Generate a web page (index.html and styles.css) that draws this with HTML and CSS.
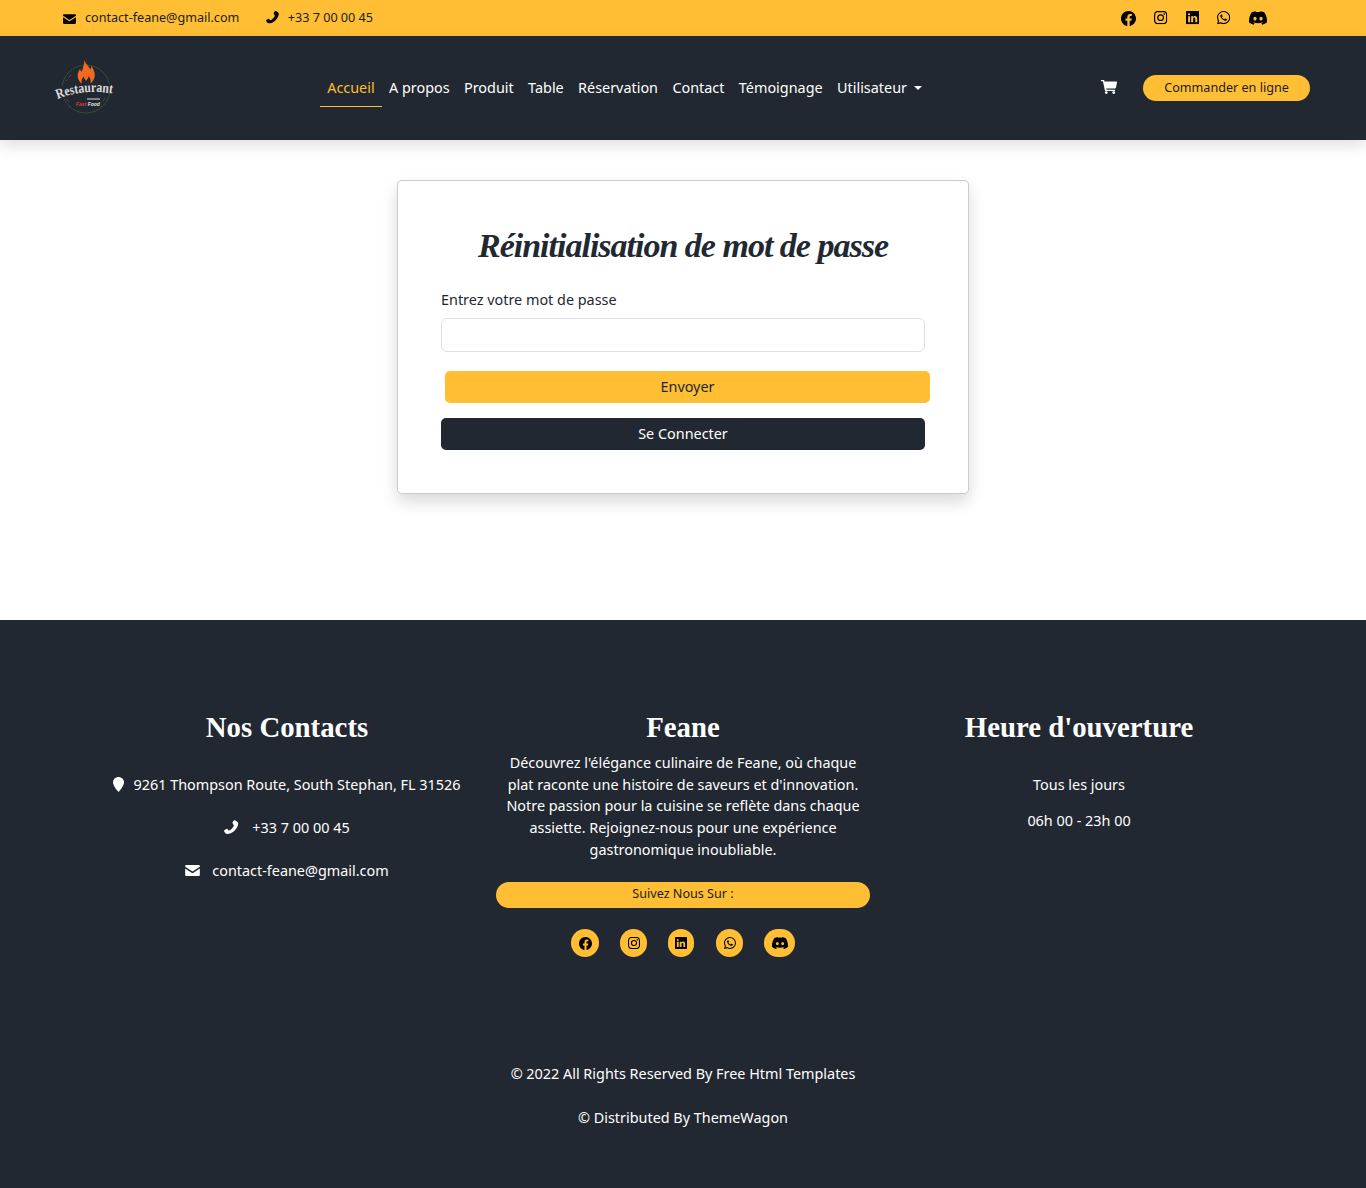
FILE: index.html
```html
<!DOCTYPE html>
<html lang="fr">
<head>
<meta charset="utf-8">
<title>Réinitialisation de mot de passe</title>
<link rel="stylesheet" href="styles.css">
</head>
<body>
<svg class="sprite" aria-hidden="true">
  <symbol id="fb" viewBox="0 0 16 16"><path d="M16 8.049c0-4.446-3.582-8.05-8-8.05C3.58 0-.002 3.603-.002 8.05c0 4.017 2.926 7.347 6.75 7.951v-5.625h-2.03V8.05H6.75V6.275c0-2.017 1.195-3.131 3.022-3.131.876 0 1.791.157 1.791.157v1.98h-1.009c-.993 0-1.303.621-1.303 1.258v1.51h2.218l-.354 2.326H9.25V16c3.824-.604 6.75-3.934 6.75-7.951"/></symbol>
  <symbol id="ig" viewBox="0 0 16 16"><path d="M8 0C5.829 0 5.556.01 4.703.048 3.85.088 3.269.222 2.76.42a3.9 3.9 0 0 0-1.417.923A3.9 3.9 0 0 0 .42 2.76C.222 3.268.087 3.85.048 4.7.01 5.555 0 5.827 0 8.001c0 2.172.01 2.444.048 3.297.04.852.174 1.433.372 1.942.205.526.478.972.923 1.417.444.445.89.719 1.416.923.51.198 1.09.333 1.942.372C5.555 15.99 5.827 16 8 16s2.444-.01 3.298-.048c.851-.04 1.434-.174 1.943-.372a3.9 3.9 0 0 0 1.416-.923c.445-.445.718-.891.923-1.417.197-.509.332-1.09.372-1.942C15.99 10.445 16 10.173 16 8s-.01-2.445-.048-3.299c-.04-.851-.175-1.433-.372-1.941a3.9 3.9 0 0 0-.923-1.417A3.9 3.9 0 0 0 13.24.42c-.51-.198-1.092-.333-1.943-.372C10.443.01 10.172 0 7.998 0zm-.717 1.442h.718c2.136 0 2.389.007 3.232.046.78.035 1.204.166 1.486.275.373.145.64.319.92.599s.453.546.598.92c.11.281.24.705.275 1.485.039.843.047 1.096.047 3.231s-.008 2.389-.047 3.232c-.035.78-.166 1.203-.275 1.485a2.5 2.5 0 0 1-.599.919c-.28.28-.546.453-.92.598-.28.11-.704.24-1.485.276-.843.038-1.096.047-3.232.047s-2.39-.009-3.233-.047c-.78-.036-1.203-.166-1.485-.276a2.5 2.5 0 0 1-.92-.598 2.5 2.5 0 0 1-.6-.92c-.109-.281-.24-.705-.275-1.485-.038-.843-.046-1.096-.046-3.233s.008-2.388.046-3.231c.036-.78.166-1.204.276-1.486.145-.373.319-.64.599-.92s.546-.453.92-.598c.282-.11.705-.24 1.485-.276.738-.034 1.024-.044 2.515-.045zm4.988 1.328a.96.96 0 1 0 0 1.92.96.96 0 0 0 0-1.92m-4.27 1.122a4.109 4.109 0 1 0 0 8.217 4.109 4.109 0 0 0 0-8.217m0 1.441a2.667 2.667 0 1 1 0 5.334 2.667 2.667 0 0 1 0-5.334"/></symbol>
  <symbol id="li" viewBox="0 0 16 16"><path d="M0 1.146C0 .513.526 0 1.175 0h13.65C15.474 0 16 .513 16 1.146v13.708c0 .633-.526 1.146-1.175 1.146H1.175C.526 16 0 15.487 0 14.854zm4.943 12.248V6.169H2.542v7.225zm-1.2-8.212c.837 0 1.358-.554 1.358-1.248-.015-.709-.52-1.248-1.342-1.248S2.4 3.226 2.4 3.934c0 .694.521 1.248 1.327 1.248zm4.908 8.212V9.359c0-.216.016-.432.08-.586.173-.431.568-.878 1.232-.878.869 0 1.216.662 1.216 1.634v3.865h2.401V9.25c0-2.22-1.184-3.252-2.764-3.252-1.274 0-1.845.7-2.165 1.193v.025h-.016l.016-.025V6.169h-2.4c.03.678 0 7.225 0 7.225z"/></symbol>
  <symbol id="wa" viewBox="0 0 16 16"><path d="M13.601 2.326A7.85 7.85 0 0 0 7.994 0C3.627 0 .068 3.558.064 7.926c0 1.399.366 2.76 1.057 3.965L0 16l4.204-1.102a7.9 7.9 0 0 0 3.79.965h.004c4.368 0 7.926-3.558 7.93-7.93A7.9 7.9 0 0 0 13.6 2.326zM7.994 14.521a6.6 6.6 0 0 1-3.356-.92l-.24-.144-2.494.654.666-2.433-.156-.251a6.56 6.56 0 0 1-1.007-3.505c0-3.626 2.957-6.584 6.591-6.584a6.56 6.56 0 0 1 4.66 1.931 6.56 6.56 0 0 1 1.928 4.66c-.004 3.639-2.961 6.592-6.592 6.592m3.615-4.934c-.197-.099-1.17-.578-1.353-.646-.182-.065-.315-.099-.445.099-.133.197-.513.646-.627.775-.114.133-.232.148-.43.05-.197-.1-.836-.308-1.592-.985-.59-.525-.985-1.175-1.103-1.372-.114-.198-.011-.304.088-.403.087-.088.197-.232.296-.346.1-.114.133-.198.198-.33.065-.134.034-.248-.015-.347-.05-.099-.445-1.076-.612-1.47-.16-.389-.323-.335-.445-.34-.114-.007-.247-.007-.38-.007a.73.73 0 0 0-.529.247c-.182.198-.691.677-.691 1.654s.71 1.916.81 2.049c.098.133 1.394 2.132 3.383 2.992.47.205.84.326 1.129.418.475.152.904.129 1.246.08.38-.058 1.171-.48 1.338-.943.164-.464.164-.86.114-.943-.049-.084-.182-.133-.38-.232"/></symbol>
  <symbol id="dc" viewBox="0 0 16 16"><path d="M13.545 2.907a13.2 13.2 0 0 0-3.257-1.011.05.05 0 0 0-.052.025c-.141.25-.297.577-.406.833a12.2 12.2 0 0 0-3.658 0 8 8 0 0 0-.412-.833.05.05 0 0 0-.052-.025c-1.125.194-2.22.534-3.257 1.011a.04.04 0 0 0-.021.018C.356 6.024-.213 9.047.066 12.032q.003.022.021.037a13.3 13.3 0 0 0 3.995 2.02.05.05 0 0 0 .056-.019q.463-.63.818-1.329a.05.05 0 0 0-.01-.059l-.018-.011a9 9 0 0 1-1.248-.595.05.05 0 0 1-.02-.066l.015-.019q.127-.095.248-.195a.05.05 0 0 1 .051-.007c2.619 1.196 5.454 1.196 8.041 0a.05.05 0 0 1 .053.007q.121.1.248.195a.05.05 0 0 1-.004.085 8 8 0 0 1-1.249.594.05.05 0 0 0-.03.03.05.05 0 0 0 .003.041c.24.465.515.909.817 1.329a.05.05 0 0 0 .056.019 13.2 13.2 0 0 0 4.001-2.02.05.05 0 0 0 .021-.037c.334-3.451-.559-6.449-2.366-9.106a.03.03 0 0 0-.02-.019m-8.198 7.307c-.789 0-1.438-.724-1.438-1.612s.637-1.613 1.438-1.613c.807 0 1.45.73 1.438 1.613 0 .888-.637 1.612-1.438 1.612m5.316 0c-.788 0-1.438-.724-1.438-1.612s.637-1.613 1.438-1.613c.807 0 1.451.73 1.438 1.613 0 .888-.631 1.612-1.438 1.612"/></symbol>
  <symbol id="mail" viewBox="0 0 16 12"><path d="M1.4 0h13.2C15.4 0 16 .6 16 1.400v.5L8 7.200 0 1.900v-.5C0 .6.6 0 1.400 0z"/><path d="M0 3.700v6.900C0 11.400.6 12 1.400 12h13.200c.8 0 1.400-.6 1.400-1.400V3.700L8.600 8.600c-.4.3-.8.3-1.200 0z"/></symbol>
  <symbol id="phone" viewBox="0 0 16 16"><path d="M15.600 2.700c.2.7.2 1.600-.2 2.800-.5 1.900-1.700 3.900-3.300 5.600-1.700 1.700-3.600 3-5.600 3.600-1.900.6-3 .6-3.900.2-.5-.2-1-.7-1.600-1.500-.5-.6-.9-1.200-1-1.600 0-.2 0-.3.2-.5.5-.5 2.300-1.600 2.900-1.800.3-.1.5 0 .7.2l1.300 1.500c.2.2.4.3.7.2 1-.5 1.900-1.200 2.800-2.100 1-1 1.800-2.100 2.300-3.200.1-.3 0-.5-.2-.7L9.500 3.200c-.2-.2-.2-.4-.1-.7.3-.7 1.400-2.100 1.900-2.400.2-.1.4-.2.6-.1.5.2 1.100.5 1.800 1 .9.6 1.600 1.200 1.900 1.700z"/></symbol>
  <symbol id="pin" viewBox="0 0 11 15"><path d="M5.500 0C2.500 0 0 2.300 0 5.300 0 8.500 3.400 12.700 5.500 15c2.100-2.300 5.500-6.500 5.500-9.700C11 2.300 8.500 0 5.500 0z"/></symbol>
  <symbol id="cart" viewBox="0 0 16 14"><path d="M0 0h2.600c.4 0 .6.200.7.500l.3 1.100h11.500c.6 0 1 .5.900 1.100l-1.100 5c-.1.400-.5.700-.9.700H5.300l.3 1.300h8.500v1.300H4.600c-.4 0-.6-.2-.7-.5L1.900 1.300H0z"/><circle cx="5.300" cy="12.600" r="1.400"/><circle cx="12.700" cy="12.600" r="1.400"/></symbol>
</svg>

<div class="topbar">
  <div class="topbar-contacts">
    <span class="topbar-item"><svg class="ico-mail"><use href="#mail"/></svg>contact-feane@gmail.com</span>
    <span class="topbar-item"><svg class="ico-phone"><use href="#phone"/></svg>+33 7 00 00 45</span>
  </div>
  <div class="topbar-social">
    <svg class="soc"><use href="#fb"/></svg>
    <svg class="soc soc-sm"><use href="#ig"/></svg>
    <svg class="soc soc-sm"><use href="#li"/></svg>
    <svg class="soc soc-sm"><use href="#wa"/></svg>
    <svg class="soc soc-wide"><use href="#dc"/></svg>
  </div>
</div>

<header class="navbar">
  <svg class="logo" viewBox="0 0 60 60" role="img" aria-label="Restaurant">
    <circle cx="30" cy="32" r="24" fill="none" stroke="#33502c" stroke-width="1"/>
    <path d="M13 20l3-3M10 24l1.500-2M47 44l2-3M11 42l2 3" stroke="#b8432b" stroke-width="1" stroke-dasharray="1 1"/>
    <path transform="translate(5.500 3) scale(.85 .95)" d="M27 0c1 4 5 6 7 10 1-2 1-3 1-4 3 4 5 8 4 12-1 3-3 6-5 7 1-3 0-6-2-8-1 3-2 3-3 5-1-2-3-3-3-5-1 2-3 3-2 8-3-2-5-5-5-9 0-3 2-5 3-7 0 2 1 3 2 3 1-4 3-7 3-12z" fill="#f26a21"/>
    <path d="M1 30l5 12 50-7-3-9" fill="#222831"/>
    <path id="logoArc" d="M1.500 42 Q28 31 60 37" fill="none"/>
    <text class="logo-name"><textPath href="#logoArc" textLength="56" lengthAdjust="spacingAndGlyphs">Restaurant</textPath></text>
    <path d="M31 42h13" stroke="#ddd" stroke-width="1"/>
    <text class="logo-sub" x="20" y="49">Fast <tspan class="logo-sub-light">Food</tspan></text>
  </svg>
  <nav class="nav">
    <a class="nav-link active" href="#">Accueil</a>
    <a class="nav-link" href="#">A propos</a>
    <a class="nav-link" href="#">Produit</a>
    <a class="nav-link" href="#">Table</a>
    <a class="nav-link" href="#">Réservation</a>
    <a class="nav-link" href="#">Contact</a>
    <a class="nav-link" href="#">Témoignage</a>
    <a class="nav-link" href="#">Utilisateur<i class="caret"></i></a>
  </nav>
  <div class="nav-right">
    <svg class="ico-cart"><use href="#cart"/></svg>
    <a class="order-btn" href="#">Commander en ligne</a>
  </div>
</header>

<main class="main">
  <form class="card">
    <h1 class="card-title">Réinitialisation de mot de passe</h1>
    <label class="label" for="pw">Entrez votre mot de passe</label>
    <input class="input" id="pw" type="password">
    <button class="btn btn-send" type="button">Envoyer</button>
    <button class="btn btn-login" type="button">Se Connecter</button>
  </form>
</main>

<footer class="footer">
  <div class="footer-cols">
    <section class="col">
      <h2 class="col-title">Nos Contacts</h2>
      <ul class="contact-list">
        <li><svg class="ico-pin"><use href="#pin"/></svg>9261 Thompson Route, South Stephan, FL 31526</li>
        <li><svg class="ico-fphone"><use href="#phone"/></svg>+33 7 00 00 45</li>
        <li><svg class="ico-fmail"><use href="#mail"/></svg>contact-feane@gmail.com</li>
      </ul>
    </section>
    <section class="col">
      <h2 class="col-title">Feane</h2>
      <p class="about">Découvrez l'élégance culinaire de Feane, où chaque plat raconte une histoire de saveurs et d'innovation. Notre passion pour la cuisine se reflète dans chaque assiette. Rejoignez-nous pour une expérience gastronomique inoubliable.</p>
      <div class="follow">Suivez Nous Sur :</div>
      <div class="circles">
        <span class="circle c28"><svg><use href="#fb"/></svg></span>
        <span class="circle c27"><svg class="thin"><use href="#ig"/></svg></span>
        <span class="circle c26"><svg class="thin"><use href="#li"/></svg></span>
        <span class="circle c27"><svg class="thin"><use href="#wa"/></svg></span>
        <span class="circle c31"><svg><use href="#dc"/></svg></span>
      </div>
    </section>
    <section class="col">
      <h2 class="col-title">Heure d'ouverture</h2>
      <p class="hours">Tous les jours</p>
      <p class="hours">06h 00 - 23h 00</p>
    </section>
  </div>
  <div class="copy">
    <p>© 2022 All Rights Reserved By Free Html Templates</p>
    <p>© Distributed By ThemeWagon</p>
  </div>
</footer>
</body>
</html>
```

FILE: styles.css
```css
* { box-sizing: border-box; }
html, body { margin: 0; padding: 0; }
body {
  font-family: "Noto Sans", "Open Sans", sans-serif;
  font-size: 14.4px;
  line-height: 1.5;
  color: #212529;
  background: #fff;
}
a { text-decoration: none; }
svg { fill: currentColor; display: block; flex: none; }
.sprite { display: none; }

.topbar {
  height: 36px;
  background: #ffbe33;
  color: #000;
  display: flex;
  align-items: center;
  justify-content: space-between;
  padding: 0 99px 0 63px;
  font-size: 12.6px;
}
.topbar-contacts { display: flex; gap: 26.5px; }
.topbar-item { display: flex; align-items: center; color: #1a1d22; }
.ico-mail { width: 13px; height: 10px; margin-right: 9px; color: #000; margin-top: 2px; }
.ico-phone { width: 13px; height: 13px; margin-right: 9px; color: #000; }
.topbar-social { display: flex; align-items: center; gap: 18.3px; }
.soc { width: 15px; height: 15px; }
.soc-sm { width: 13.3px; height: 13.3px; }
.soc-wide { width: 18px; height: 18px; }

.navbar {
  height: 104px;
  background: #222831;
  display: flex;
  align-items: center;
  padding: 0 56px;
  box-shadow: 0 6px 14px rgba(0, 0, 0, .12);
  position: relative;
}
.logo { width: 60px; height: 60px; margin-bottom: 2px; overflow: visible; }
.logo-name { font-family: "Liberation Serif", serif; font-size: 14px; font-weight: 700; fill: #dcdcdc; }
.logo-sub { font-family: "Liberation Sans", sans-serif; font-size: 5px; font-weight: 700; font-style: italic; fill: #d8432b; }
.logo-sub-light { fill: #e4e4e4; }
.nav { display: flex; margin-left: 204px; height: 38px; }
.nav-link {
  color: #fff;
  padding: 0 7.2px;
  height: 38px;
  line-height: 38px;
  display: flex;
  align-items: center;
  border-bottom: 1px solid transparent;
}
.nav-link.active { color: #ffbe33; border-bottom-color: #ffbe33; }
.caret {
  display: inline-block;
  margin-left: 7px;
  border-top: 4px solid #fff;
  border-left: 4px solid transparent;
  border-right: 4px solid transparent;
}
.nav-right { margin-left: auto; display: flex; align-items: center; gap: 26px; }
.ico-cart { width: 16px; height: 14px; margin-bottom: 3px; color: #fff; }
.order-btn {
  height: 26px;
  width: 167px;
  border-radius: 13px;
  background: #ffbe33;
  color: #1a1d22;
  font-size: 12.6px;
  display: flex;
  align-items: center;
  justify-content: center;
}

.main { height: 480px; padding-top: 40px; display: flex; justify-content: center; align-items: flex-start; }
.card {
  width: 572px;
  height: 314px;
  background: #fff;
  border: 1px solid rgba(0, 0, 0, .2);
  border-radius: 5px;
  box-shadow: 0 8px 16px rgba(0, 0, 0, .15);
  padding: 0 43px;
  display: flex;
  flex-direction: column;
}
.card-title {
  margin: 40px 0 0;
  height: 60px;
  font-family: "Liberation Serif", serif;
  font-style: italic;
  font-size: 34px;
  letter-spacing: -1px;
  font-weight: 700;
  line-height: 50px;
  text-align: center;
  color: #222831;
}
.label { margin-top: 8px; height: 22px; color: #222831; }
.input {
  width: 484px;
  height: 34px;
  margin-top: 7px;
  border: 1px solid #dee2e6;
  border-radius: 6px;
  background: #fff;
}
.btn {
  height: 32px;
  border: 0;
  border-radius: 5px;
  font: inherit;
  width: 484px;
  padding: 0;
}
.btn-send { margin: 19px 0 0 4px; background: #ffbe33; color: #222831; width: 485px; }
.btn-login { margin-top: 15px; background: #222831; color: #fff; }

.footer { height: 568px; background: #222831; color: #fff; padding-top: 85px; }
.footer-cols { width: 1188px; margin: 0 auto; display: grid; grid-template-columns: repeat(3, 396px); height: 326px; }
.col { text-align: center; }
.col-title {
  margin: 0;
  font-family: "Liberation Serif", serif;
  font-size: 28.8px;
  font-weight: 700;
  line-height: 44px;
}
.contact-list { list-style: none; margin: 25px 0 0; padding: 0; display: flex; flex-direction: column; gap: 21.4px; }
.contact-list li { display: flex; justify-content: center; align-items: center; height: 21.6px; }
.ico-pin { width: 11px; height: 15px; margin-right: 9px; }
.ico-fphone { width: 14.5px; height: 15px; margin-right: 13.5px; }
.ico-fmail { width: 15px; height: 11px; margin-right: 12px; }
.about { margin: 3.2px auto 0; width: 374px; }
.follow {
  width: 374px;
  height: 26px;
  margin: 21.8px auto 0;
  background: #ffbe33;
  border-radius: 13px;
  color: #1a1d22;
  font-size: 12.6px;
  line-height: 24px;
}
.circles { display: flex; justify-content: center; gap: 21px; margin-top: 21px; }
.circle {
  height: 28px;
  border-radius: 14px;
  background: #ffbe33;
  color: #000;
  display: flex;
  align-items: center;
  justify-content: center;
}
.circle svg { width: 13px; height: 13px; }
.circle svg.thin { width: 12px; height: 12px; }
.c26 { width: 26px; margin-right: 1px; }
.c27 { width: 27px; }
.c28 { width: 28px; }
.c31 { width: 31px; }
.circle:last-child svg { width: 16px; height: 16px; }
.hours { margin: 0; }
.col-title + .hours { margin-top: 25px; }
.hours + .hours { margin-top: 14.5px; }

.copy { text-align: center; margin-top: 32px; }
.copy p { margin: 0 0 22.4px; }
```
